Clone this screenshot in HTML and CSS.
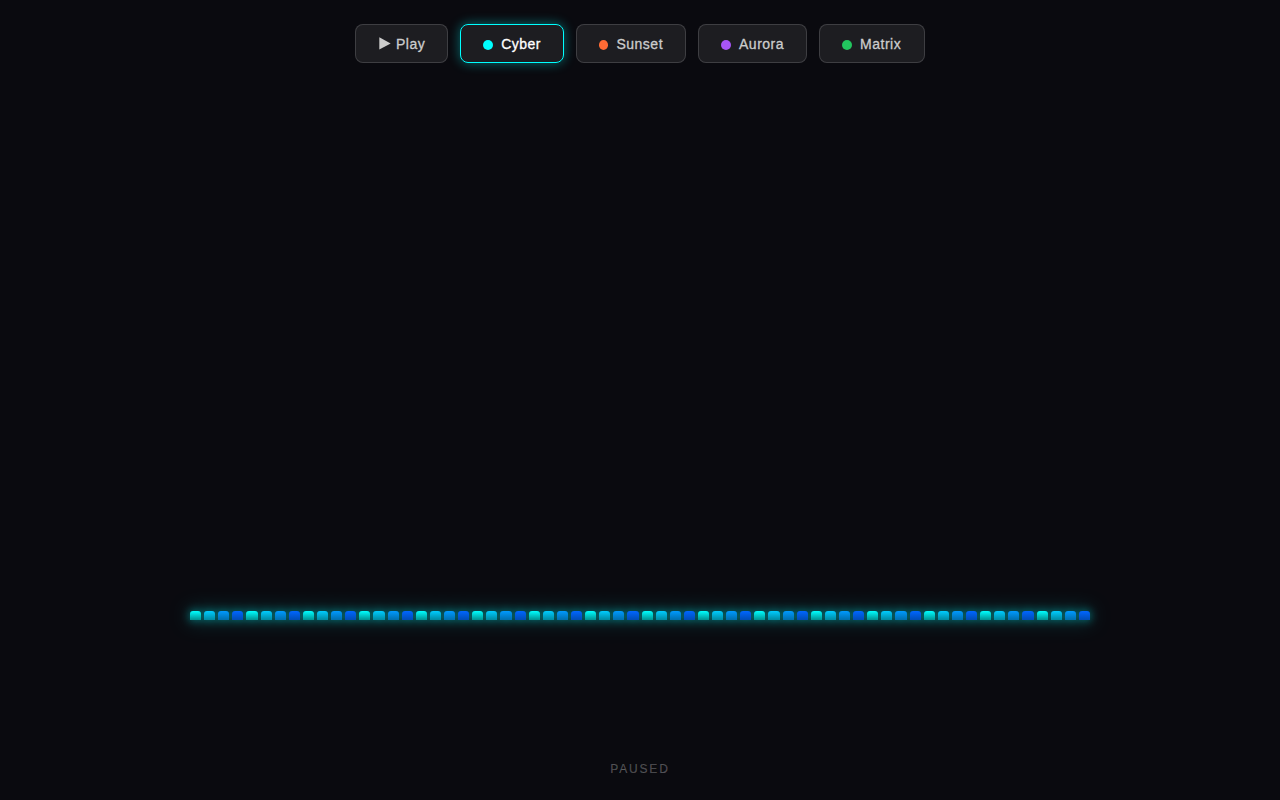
FILE: index.html
```
<!DOCTYPE html>
<html lang="en">
<head>
    <meta charset="UTF-8">
    <meta name="viewport" content="width=device-width, initial-scale=1.0">
    <title>Audio Visualizer</title>
    <link rel="stylesheet" href="styles.css">
</head>
<body>
    <div class="controls">
        <button class="btn play" id="play">
            <svg class="icon" width="12" height="13" viewBox="0 0 12 13"><path d="M0.3 0.3L11.7 6.4L0.3 12.6Z" fill="currentColor"/></svg><span id="label">Play</span>
        </button>
        <button class="btn theme active"><span class="dot cyber"></span>Cyber</button>
        <button class="btn theme btn-sunset"><span class="dot sunset"></span>Sunset</button>
        <button class="btn theme"><span class="dot aurora"></span>Aurora</button>
        <button class="btn theme btn-matrix"><span class="dot matrix"></span>Matrix</button>
    </div>
    <main class="stage">
        <div class="bars" id="bars"></div>
    </main>
    <div class="status" id="status">PAUSED</div>
    <script>
        const bars = document.getElementById('bars');
        const play = document.getElementById('play');
        const label = document.getElementById('label');
        const status = document.getElementById('status');
        const themes = document.querySelectorAll('.theme');
        let playing = false;

        for (let i = 0; i < 64; i++) {
            const bar = document.createElement('div');
            bar.className = 'bar';
            bars.appendChild(bar);
        }

        const draw = () => {
            [...bars.children].forEach((bar, i) => {
                const level = Math.abs(Math.sin(Date.now() / 400 + i * 0.3));
                bar.style.height = playing ? 9 + level * 250 + 'px' : '';
            });
            if (playing) requestAnimationFrame(draw);
        };

        play.addEventListener('click', () => {
            playing = !playing;
            label.textContent = playing ? 'Pause' : 'Play';
            status.textContent = playing ? 'PLAYING' : 'PAUSED';
            draw();
        });

        themes.forEach(theme => {
            theme.addEventListener('click', () => {
                themes.forEach(t => t.classList.remove('active'));
                theme.classList.add('active');
            });
        });
    </script>
</body>
</html>
```
FILE: styles.css
```
* {
    box-sizing: border-box;
}
body {
    margin: 0;
    height: 100vh;
    display: flex;
    flex-direction: column;
    align-items: center;
    padding: 24px 0 23px;
    overflow: hidden;
    background-color: #0a0a0f;
    font-family: "Liberation Sans", Arial, sans-serif;
}
.controls {
    display: flex;
    gap: 12px;
}
.btn {
    height: 39px;
    display: flex;
    align-items: center;
    padding: 10px 22px;
    font-family: inherit;
    font-size: 14px;
    font-weight: 500;
    letter-spacing: 0.5px;
    color: #ccc;
    -webkit-text-stroke: 0.3px;
    background-color: rgba(255, 255, 255, 0.08);
    border: 1px solid rgba(255, 255, 255, 0.15);
    border-radius: 8px;
    cursor: pointer;
}
.btn.active {
    color: #fff;
    border-color: #00ffff;
    box-shadow: 0 0 12px rgba(0, 255, 255, 0.4);
}
.btn-sunset {
    width: 110px;
}
.btn-matrix {
    width: 106px;
}
.icon {
    margin: 0 5px 0 1px;
    stroke: none;
}
.dot {
    width: 10px;
    height: 10px;
    margin: 2px 8px 0 0;
    border-radius: 50%;
}
.cyber {
    background-color: #00ffff;
}
.sunset {
    background-color: #ff6b35;
}
.aurora {
    background-color: #a855f7;
}
.matrix {
    background-color: #22c55e;
}
.stage {
    flex: 1;
    width: 900px;
    display: flex;
    padding-bottom: 142px;
}
.bars {
    flex: 1;
    display: flex;
    align-items: flex-end;
    gap: 3px;
    filter: drop-shadow(0 0 5px rgba(0, 255, 255, 0.5)) drop-shadow(0 0 10px rgba(0, 255, 255, 0.25));
}
.bar {
    flex: 1;
    height: 9px;
    border-radius: 3px 3px 0 0;
    background: linear-gradient(to top, #009090, #00ffff);
}
.bar:nth-child(4n + 2) {
    background: linear-gradient(to top, #0088a0, #00ccff);
}
.bar:nth-child(4n + 3) {
    background: linear-gradient(to top, #006eac, #0099ff);
}
.bar:nth-child(4n) {
    background: linear-gradient(to top, #004cb4, #0066ff);
}
.status {
    font-size: 12px;
    line-height: 15px;
    letter-spacing: 1.8px;
    color: rgba(255, 255, 255, 0.25);
    -webkit-text-stroke: 0.2px;
}
```
